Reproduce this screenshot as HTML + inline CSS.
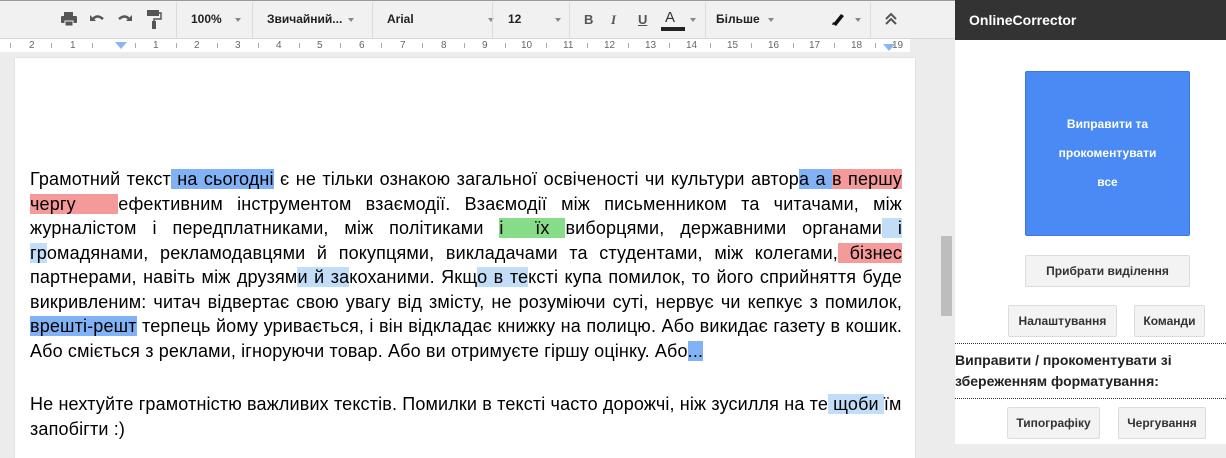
<!DOCTYPE html>
<html><head><meta charset="utf-8"><style>
*{margin:0;padding:0;box-sizing:border-box}
body{width:1226px;height:444px;overflow:hidden;position:relative;background:#ececec;font-family:"Liberation Sans",Arial,sans-serif}
.tb{position:absolute;left:0;top:0;width:955px;height:39px;background:#f1f1f1;border-top:1px solid #9a9a9a;border-bottom:1px solid #d8d8d8}
.sep{position:absolute;top:1px;width:1px;height:37px;background:#dcdcdc}
.t{position:absolute;top:11px;font-size:12px;color:#222}
.dd{position:absolute;top:17px;width:0;height:0;border-left:3px solid transparent;border-right:3px solid transparent;border-top:4px solid #888}
.ruler{position:absolute;left:0;top:39px;width:910px;height:13px;background:#fff;font-size:10px;color:#666}
.ruler span{position:absolute;top:1px}
.tk{position:absolute;top:4px;width:1px;height:5px;background:#aaa}
.page{position:absolute;left:15px;top:58px;width:900px;height:400px;background:#fff;box-shadow:0 0 1px #bbb}
.ln{position:absolute;left:30px;width:872px;height:24px;font-size:18px;letter-spacing:0.15px;line-height:24px;color:#000;text-align:justify;text-align-last:justify;white-space:nowrap}
.ln.l{text-align-last:left}
.b{background:#82b2f6}.lb{background:#c2ddf8}.r{background:#f59a9a}.g{background:#87dc87}
.side{position:absolute;left:955px;top:0;width:271px;height:444px;background:#fff}
.hdr{height:40px;background:#333;color:#fff;font-weight:bold;font-size:14px;padding:12px 0 0 14px}
.btn{position:absolute;background:#f3f3f3;border:1px solid #dcdcdc;border-radius:2px;font-size:12px;font-weight:bold;color:#333;text-align:center}
.dot{position:absolute;left:0;width:271px;border-top:1px dotted #333}
</style></head><body>
<div class="tb">
<svg style="position:absolute;left:60px;top:10px" width="18" height="16" viewBox="0 0 18 16"><rect x="4" y="1" width="9" height="4" fill="#555"/><rect x="1" y="5" width="16" height="7" rx="1" fill="#555"/><rect x="5" y="10" width="8" height="5" fill="#555" stroke="#f1f1f1" stroke-width="1"/></svg>
<svg style="position:absolute;left:89px;top:12px" width="16" height="12" viewBox="0 0 16 12"><path d="M4 6 Q8 1 14 6" stroke="#555" stroke-width="2.5" fill="none"/><path d="M1 2 L1 8 L7 8 Z" fill="#555"/></svg>
<svg style="position:absolute;left:117px;top:12px" width="16" height="12" viewBox="0 0 16 12"><path d="M12 6 Q8 1 2 6" stroke="#555" stroke-width="2.5" fill="none"/><path d="M15 2 L15 8 L9 8 Z" fill="#555"/></svg>
<svg style="position:absolute;left:146px;top:8px" width="16" height="20" viewBox="0 0 16 20"><rect x="1" y="1" width="12" height="6" fill="#555"/><path d="M13 4 H15 V10 H8 V12" stroke="#555" stroke-width="1.5" fill="none"/><rect x="6" y="12" width="4" height="8" fill="#555"/></svg>
<div class="sep" style="left:176px"></div>
<div class="t" style="left:191px;font-weight:bold">100%</div><div class="dd" style="left:235px"></div>
<div class="sep" style="left:252px"></div>
<div class="t" style="left:267px;font-weight:bold">Звичайний...</div><div class="dd" style="left:348px"></div>
<div class="sep" style="left:372px"></div>
<div class="t" style="left:387px;font-weight:bold">Arial</div><div class="dd" style="left:488px"></div>
<div class="sep" style="left:492px"></div>
<div class="t" style="left:508px;font-weight:bold">12</div><div class="dd" style="left:555px"></div>
<div class="sep" style="left:569px"></div>
<div class="t" style="left:584px;font-weight:bold;color:#555;font-size:13px">B</div>
<div class="t" style="left:611px;font-weight:bold;font-style:italic;color:#555;font-size:13px;font-family:'Liberation Serif',serif">I</div>
<div class="t" style="left:638px;font-weight:bold;text-decoration:underline;color:#555;font-size:13px">U</div>
<div class="t" style="left:665px;top:8px;color:#333;font-size:15px">A</div><div style="position:absolute;left:661px;top:26px;width:24px;height:4px;background:#222"></div><div class="dd" style="left:690px"></div>
<div class="sep" style="left:705px"></div>
<div class="t" style="left:716px;font-weight:bold">Більше</div><div class="dd" style="left:768px"></div>
<svg style="position:absolute;left:830px;top:10px" width="16" height="16" viewBox="0 0 16 16"><path d="M3 13 L11 3 L14 5 L6 15 Z" fill="#111"/><path d="M2 14 L3 11 L6 13 Z" fill="#111"/></svg><div class="dd" style="left:855px"></div>
<div class="sep" style="left:870px"></div>
<svg style="position:absolute;left:884px;top:11px" width="14" height="14" viewBox="0 0 14 14"><path d="M2 7 L7 2 L12 7 M2 12 L7 7 L12 12" stroke="#555" stroke-width="2" fill="none"/></svg>
</div>
<div class="ruler">
<span style="left:29px">2</span><span style="left:70px">1</span>
<span style="left:153px">1</span><span style="left:194px">2</span><span style="left:235px">3</span><span style="left:276px">4</span><span style="left:317px">5</span><span style="left:359px">6</span><span style="left:400px">7</span><span style="left:441px">8</span><span style="left:482px">9</span><span style="left:521px">10</span><span style="left:563px">11</span><span style="left:604px">12</span><span style="left:645px">13</span><span style="left:686px">14</span><span style="left:727px">15</span><span style="left:768px">16</span><span style="left:809px">17</span><span style="left:851px">18</span><span style="left:892px">19</span>
<div class="tk" style="left:10px"></div><div class="tk" style="left:51px"></div><div class="tk" style="left:92px"></div><div class="tk" style="left:135px"></div><div class="tk" style="left:176px"></div><div class="tk" style="left:217px"></div><div class="tk" style="left:258px"></div><div class="tk" style="left:299px"></div><div class="tk" style="left:340px"></div><div class="tk" style="left:381px"></div><div class="tk" style="left:422px"></div><div class="tk" style="left:464px"></div><div class="tk" style="left:505px"></div><div class="tk" style="left:546px"></div><div class="tk" style="left:587px"></div><div class="tk" style="left:628px"></div><div class="tk" style="left:669px"></div><div class="tk" style="left:710px"></div><div class="tk" style="left:751px"></div><div class="tk" style="left:793px"></div><div class="tk" style="left:834px"></div><div class="tk" style="left:875px"></div>
<div style="position:absolute;left:115px;top:3px;width:0;height:0;border-left:6px solid transparent;border-right:6px solid transparent;border-top:7px solid #8ab4f8"></div>
<div style="position:absolute;left:883px;top:5px;width:0;height:0;border-left:6px solid transparent;border-right:6px solid transparent;border-top:7px solid #8ab4f8"></div>
</div>
<div class="page"></div>
<div style="position:absolute;left:941px;top:236px;width:11px;height:80px;background:#bdbdbd"></div>
<div class="ln" style="top:167px">Грамотний текст<span class="b"> на сьогодні</span> є не тільки ознакою загальної освіченості чи культури автор<span class="b">а а </span><span class="r">в першу</span></div>
<div class="ln" style="top:192px"><span class="r">чергу&nbsp;&nbsp; </span>ефективним інструментом взаємодії. Взаємодії між письменником та читачами, між</div>
<div class="ln" style="top:216px">журналістом і передплатниками, між політиками <span class="g">і&nbsp; їх </span>виборцями, державними органами<span class="lb"> і</span></div>
<div class="ln" style="top:241px"><span class="lb">гр</span>омадянами, рекламодавцями й покупцями, викладачами та студентами, між колегами,<span class="r"> бізнес</span></div>
<div class="ln" style="top:265px">партнерами, навіть між друзям<span class="lb">и й за</span>коханими. Якщ<span class="lb">о в те</span>ксті купа помилок, то його сприйняття буде</div>
<div class="ln" style="top:290px">викривленим: читач відвертає свою увагу від змісту, не розуміючи суті, нервує чи кепкує з помилок,</div>
<div class="ln" style="top:314px"><span class="b">врешті-решт</span> терпець йому уривається, і він відкладає книжку на полицю. Або викидає газету в кошик.</div>
<div class="ln l" style="top:339px">Або сміється з реклами, ігноруючи товар. Або ви отримуєте гіршу оцінку. Або<span class="b">...</span></div>
<div class="ln l" style="top:392px">Не нехтуйте грамотністю важливих текстів. Помилки в тексті часто дорожчі, ніж зусилля на те<span class="lb"> щоби </span>їм</div>
<div class="ln l" style="top:417px">запобігти :)</div>
<div class="side">
<div class="hdr">OnlineCorrector</div>
<div class="btn" style="left:70px;top:71px;width:165px;height:165px;background:#4a8af4;border-color:#3b78e7;color:#fff;line-height:29px;padding-top:38px">Виправити та<br>прокоментувати<br>все</div>
<div class="btn" style="left:70px;top:255px;width:165px;height:32px;line-height:30px">Прибрати виділення</div>
<div class="btn" style="left:53px;top:305px;width:109px;height:32px;line-height:30px">Налаштування</div>
<div class="btn" style="left:179px;top:305px;width:71px;height:32px;line-height:30px">Команди</div>
<div class="dot" style="top:343px"></div>
<div style="position:absolute;left:0;top:350px;font-size:14px;font-weight:bold;color:#222;line-height:21px">Виправити / прокоментувати зі<br>збереженням форматування:</div>
<div class="dot" style="top:398px"></div>
<div class="btn" style="left:52px;top:407px;width:93px;height:32px;line-height:30px">Типографіку</div>
<div class="btn" style="left:163px;top:407px;width:88px;height:32px;line-height:30px">Чергування</div>
</div>
</body></html>
